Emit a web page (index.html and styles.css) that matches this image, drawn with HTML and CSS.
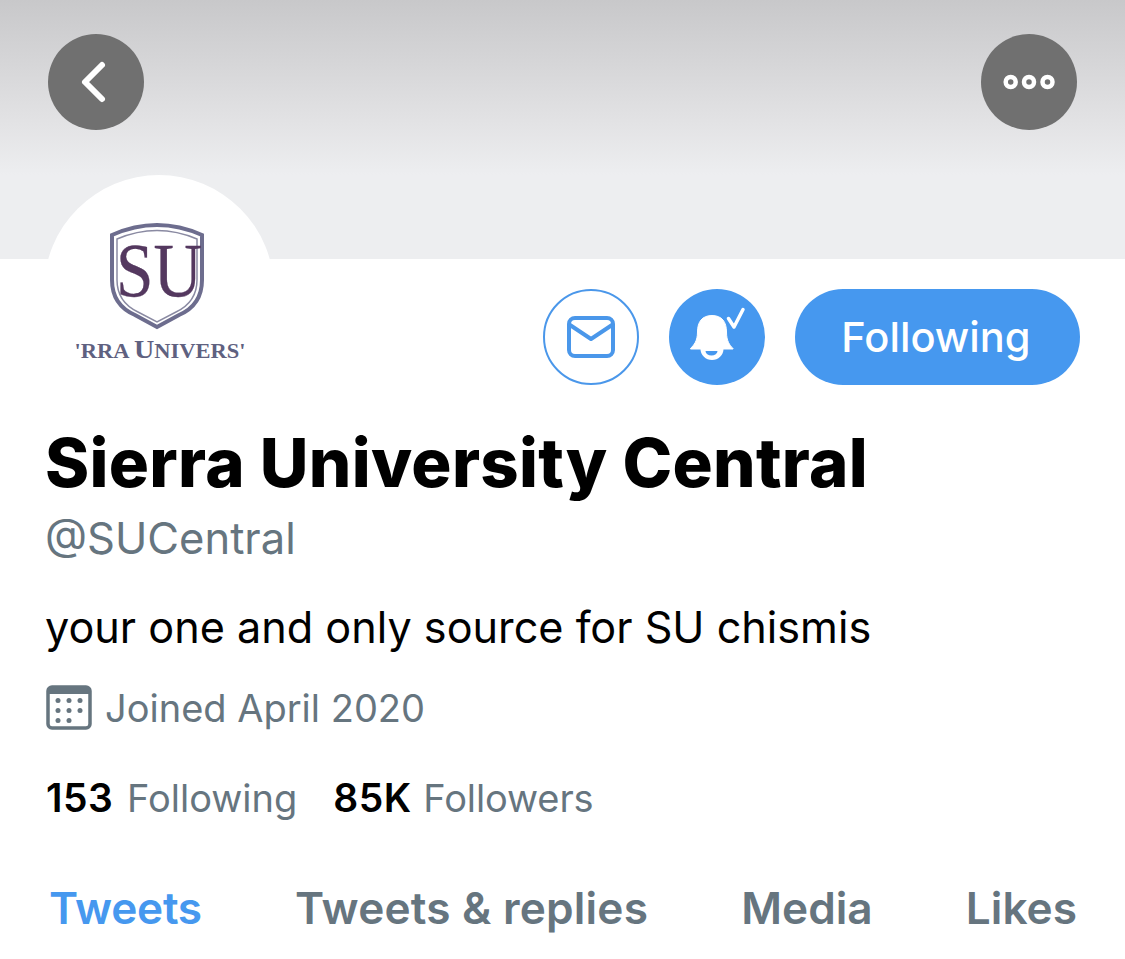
FILE: index.html
```html
<!DOCTYPE html>
<html lang="en">
<head>
<meta charset="utf-8">
<title>Sierra University Central</title>
<link rel="stylesheet" href="styles.css">
</head>
<body>
<div class="profile">
  <header class="banner">
    <button class="round-btn" aria-label="Back">
      <svg width="96" height="96" viewBox="0 0 96 96"><path d="M54 31 L37 48 L54 65" fill="none" stroke="#fff" stroke-width="6" stroke-linecap="round" stroke-linejoin="round"/></svg>
    </button>
    <button class="round-btn" aria-label="More">
      <svg width="96" height="96" viewBox="0 0 96 96"><g fill="none" stroke="#fff" stroke-width="4.500"><circle cx="29.700" cy="48" r="5"/><circle cx="48" cy="48" r="5"/><circle cx="66.500" cy="48" r="5"/></g></svg>
    </button>
  </header>

  <div class="avatar">
    <svg width="230" height="230" viewBox="0 0 230 230">
      <path d="M68 60 Q113 40 158 60 L158 105 Q158 130 135 140 L113 152 L91 140 Q68 130 68 105 Z" fill="none" stroke="#6d6d8e" stroke-width="4"/>
      <path d="M73 64 Q113 47 153 64 L153 105 Q153 127 132 137 L113 147 L94 137 Q73 127 73 105 Z" fill="none" stroke="#8a8aa2" stroke-width="1.500"/>
      <text class="logo-su" x="115" y="121" text-anchor="middle" textLength="86" lengthAdjust="spacingAndGlyphs">SU</text>
      <text class="logo-name" x="116" y="183" text-anchor="middle" textLength="171" lengthAdjust="spacingAndGlyphs"><tspan class="logo-small">'RRA </tspan>U<tspan class="logo-small">NIVERS'</tspan></text>
    </svg>
  </div>

  <main class="content">
    <div class="actions">
      <button class="icon-btn outline" aria-label="Message">
        <svg width="48" height="44" viewBox="0 0 48 44"><rect x="2" y="3" width="44" height="38" rx="6" fill="none" stroke="#4a97ea" stroke-width="4"/><path d="M3 10 L24 24 L45 10" fill="none" stroke="#4a97ea" stroke-width="4" stroke-linejoin="round"/></svg>
      </button>
      <button class="icon-btn filled" aria-label="Notifications on">
        <svg width="96" height="96" viewBox="0 0 96 96">
          <path d="M43 26.500 C33 26.500 28.500 33 28.500 43 C28.500 52 25 56 21.500 59.500 L21.500 60 L64 60 L64 59.500 C60.500 56 57.500 52 57.500 43 C57.500 33 53 26.500 43 26.500 Z" fill="#fff" stroke="#fff" stroke-width="1" stroke-linejoin="round"/>
          <path d="M31.500 60 A11.500 11 0 0 0 54.500 60 Z" fill="#fff"/>
          <path d="M36.500 62 A6 4.500 0 0 0 48.500 62 Z" fill="#4698ef"/>
          <path d="M59.500 29.500 L65 38 L74 20.500" fill="none" stroke="#fff" stroke-width="3.500" stroke-linecap="round" stroke-linejoin="round"/>
        </svg>
      </button>
      <button class="follow-btn">Following</button>
    </div>

    <h1 class="name">Sierra University Central</h1>
    <p class="handle">@SUCentral</p>
    <p class="bio">your one and only source for SU chismis</p>

    <div class="joined">
      <svg width="46" height="46" viewBox="0 0 46 46">
        <rect x="2" y="2" width="42" height="41" rx="4" fill="none" stroke="#66757f" stroke-width="3.500"/>
        <rect x="2" y="2" width="42" height="7" fill="#66757f"/>
        <g fill="#66757f">
          <circle cx="12" cy="15.500" r="2.500"/><circle cx="23" cy="15.500" r="2.500"/><circle cx="34" cy="15.500" r="2.500"/>
          <circle cx="12" cy="25.500" r="2.500"/><circle cx="23" cy="25.500" r="2.500"/><circle cx="34" cy="25.500" r="2.500"/>
          <circle cx="12" cy="35.500" r="2.500"/><circle cx="23" cy="35.500" r="2.500"/>
        </g>
      </svg>
      <span>Joined April 2020</span>
    </div>

    <div class="stats">
      <span class="stat"><b>153</b> Following</span>
      <span class="stat"><b>85K</b> Followers</span>
    </div>

    <nav class="tabs">
      <a class="tab active">Tweets</a>
      <a class="tab replies">Tweets &amp; replies</a>
      <a class="tab">Media</a>
      <a class="tab">Likes</a>
    </nav>
  </main>
</div>
</body>
</html>
```
FILE: styles.css
```css
* { box-sizing: border-box; }
html, body { margin: 0; padding: 0; background: #fff; }
body { font-family: Inter, "Liberation Sans", sans-serif; width: 1125px; height: 959px; overflow: hidden; }
.profile { position: relative; }
.banner {
  height: 259px;
  padding: 34px 48px 0;
  display: flex;
  justify-content: space-between;
  align-items: flex-start;
  background: linear-gradient(#c8c8ca 0, #e3e3e5 125px, #edeef0 175px);
}
.round-btn {
  width: 96px; height: 96px; padding: 0; border: 0; border-radius: 50%;
  background: #707070;
  display: block;
}
.round-btn svg { display: block; }
.avatar {
  position: absolute; left: 44px; top: 175px;
  width: 230px; height: 230px; border-radius: 50%; background: #fff;
}
.avatar svg { display: block; }
.logo-su { font-family: "Liberation Serif", serif; font-size: 77px; fill: #54385f; stroke: #54385f; stroke-width: 0.3px; }
.logo-name { font-family: "Liberation Serif", serif; font-size: 25px; font-weight: 700; fill: #5f6180; }
.logo-small { font-size: 20px; }
.content { padding: 30px 45px 0 45px; position: relative; }
.actions { display: flex; justify-content: flex-end; align-items: center; gap: 30px; height: 96px; }
.icon-btn {
  width: 96px; height: 96px; padding: 0; border-radius: 50%;
  display: flex; align-items: center; justify-content: center;
}
.outline { background: #fff; border: 2px solid #4a97ea; }
.filled { background: #4698ef; border: 0; }
.follow-btn {
  width: 285px; height: 96px; border: 0; border-radius: 48px; padding: 0 3px 0 0;
  background: #4698ef; color: #fff;
  font: 550 41.600px Inter, "Liberation Sans", sans-serif;
}
.name { margin: 42px 0 0; font-size: 67px; line-height: 72px; font-weight: 800; letter-spacing: 0.3px; color: #000; white-space: nowrap; }
.handle { margin: 15px 0 0; font-size: 43.500px; line-height: 48px; color: #66757f; }
.bio { margin: 41px 0 0; font-size: 43.200px; line-height: 48px; color: #000; }
.joined { margin-top: 33px; margin-left: 1px; display: flex; align-items: center; gap: 13px; height: 48px; font-size: 38px; color: #66757f; }
.joined svg { display: block; flex: none; }
.stats { margin-top: 42px; margin-left: 1px; display: flex; gap: 36px; font-size: 38px; line-height: 48px; word-spacing: 3px; color: #66757f; }
.stat b { font-size: 39px; font-weight: 600; letter-spacing: 0.5px; color: #000; }
.stat + .stat { word-spacing: 1px; letter-spacing: -0.1px; }
.tabs { margin-top: 61px; display: flex; justify-content: space-between; padding: 0 3px 0 4px; font-size: 44.200px; line-height: 50px; font-weight: 600; color: #66757f; }
.tab.active { color: #4698ef; letter-spacing: -0.3px; }
.tab.replies { letter-spacing: 0.2px; }
```
